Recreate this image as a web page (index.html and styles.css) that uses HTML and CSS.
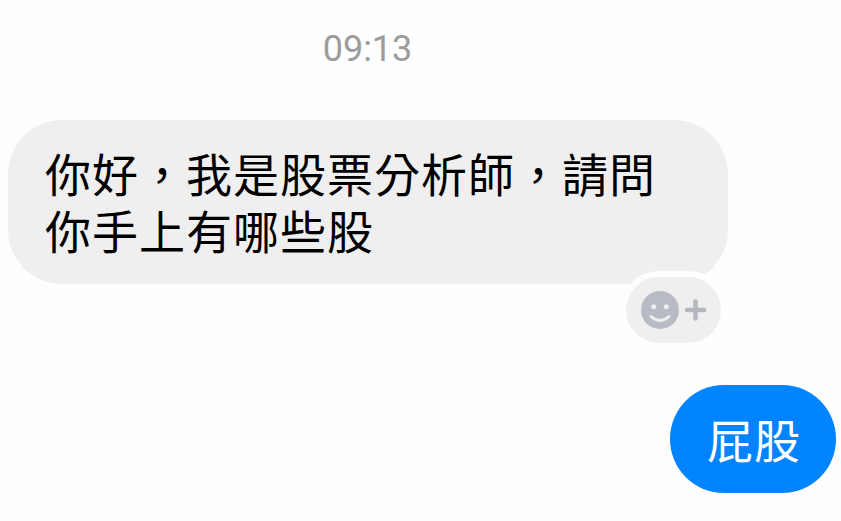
FILE: index.html
```html
<!DOCTYPE html>
<html lang="zh-Hant">
<head>
    <meta charset="UTF-8">
    <meta name="viewport" content="width=device-width, initial-scale=1.0">
    <title>Chat</title>
    <link rel="stylesheet" href="styles.css">
</head>
<body>
    <div class="chat">
        <p class="time">09:13</p>

        <div class="message received">
            <p class="text">你好，我是股票分析師，請問<br>你手上有哪些股</p>
            <button class="react" aria-label="React">
                <svg width="66" height="38" viewBox="0 0 66 38">
                    <circle cx="19" cy="19" r="19" fill="#b9bbc4"/>
                    <circle cx="12.8" cy="15.8" r="2.5" fill="#efefef"/>
                    <circle cx="25.2" cy="15.8" r="2.5" fill="#efefef"/>
                    <path d="M10 25.500q9 8 18 0" fill="none" stroke="#efefef" stroke-width="3" stroke-linecap="round"/>
                    <path d="M54.500 10.500v17M46 19h17" stroke="#b5b7c0" stroke-width="4.600" stroke-linecap="round"/>
                </svg>
            </button>
        </div>

        <div class="message sent">
            <p class="text">屁股</p>
        </div>
    </div>
</body>
</html>
```

FILE: styles.css
```css
* {
    margin: 0;
    padding: 0;
    box-sizing: border-box;
}
body {
    background-color: #fefefe;
    font-family: Roboto, "Noto Sans CJK TC", sans-serif;
}
.chat {
    display: flex;
    flex-direction: column;
    height: 521px;
    padding: 28px 5px 0 8px;
    overflow: hidden;
}
.time {
    width: 719px;
    height: 92px;
    color: #9c9c9c;
    font-size: 36px;
    line-height: 42px;
    text-align: center;
}
.message .text {
    font-family: "Liberation Sans", "Noto Sans CJK TC", sans-serif;
    font-size: 46px;
    letter-spacing: 1px;
    line-height: 57px;
    white-space: nowrap;
}
.received {
    position: relative;
    width: 720px;
    height: 164px;
    padding: 28px 37px;
    border-radius: 54px;
    background-color: #efefef;
    color: #000;
}
.react {
    position: absolute;
    right: 1px;
    bottom: -65px;
    display: flex;
    justify-content: center;
    align-items: center;
    width: 107px;
    height: 78px;
    border: 6px solid #fefefe;
    border-radius: 39px;
    background-color: #efefef;
}
.sent {
    align-self: flex-end;
    width: 166px;
    height: 108px;
    margin-top: 101px;
    padding: 29px 37px;
    border-radius: 54px;
    background-color: #0084ff;
    color: #fff;
}
```
